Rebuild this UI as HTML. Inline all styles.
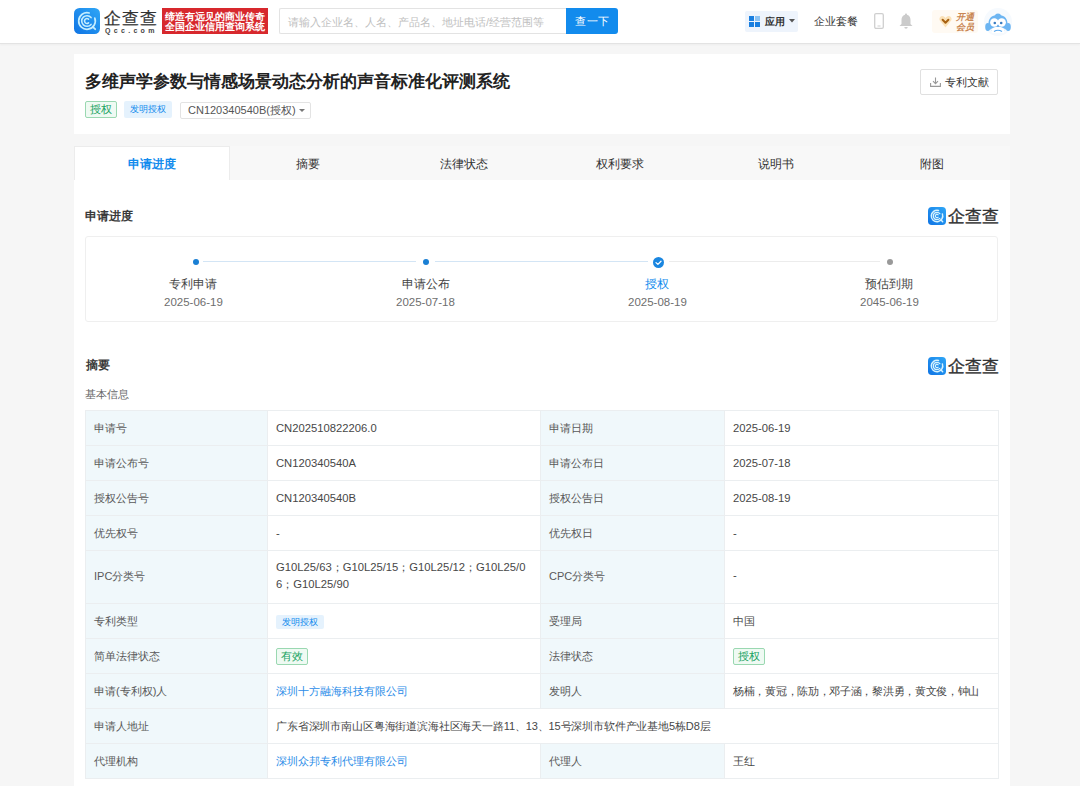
<!DOCTYPE html>
<html><head><meta charset="utf-8">
<style>
*{margin:0;padding:0;box-sizing:border-box}
html,body{width:1080px;height:786px;overflow:hidden}
body{background:#f6f6f6;font-family:"Liberation Sans",sans-serif;color:#333;font-size:12px;position:relative}
.abs{position:absolute}
.t{position:absolute;white-space:nowrap;line-height:1}
#hdr{position:absolute;left:0;top:0;width:1080px;height:44px;background:#fff;border-bottom:1px solid #e3e3e3;box-shadow:0 1px 2px rgba(0,0,0,0.04)}
.card{position:absolute;background:#fff}
.tab{position:absolute;top:147px;height:33px;width:156px;text-align:center;font-size:12px;line-height:35px;color:#333}
.h{position:absolute;font-size:12px;font-weight:bold;color:#3a3a3a;line-height:1;white-space:nowrap}
.tbl{position:absolute;left:85px;top:410px;width:913px;border-collapse:collapse;table-layout:fixed}
.tbl td{border:1px solid #ebeef0;font-size:11px;color:#474747;padding:0 8px;height:35px;line-height:18px;vertical-align:middle}
.tbl td.l{background:#f0f8fb;color:#595959}
.tag{display:inline-block;font-size:10px;line-height:14px;height:14px;padding:0 6px;border-radius:2px;vertical-align:middle}
.gtag{display:inline-block;border:1px solid #9ad8b1;background:#effaf3;color:#1aa362;font-size:11px;height:17px;line-height:15px;padding:0 4px;border-radius:2px;vertical-align:middle}
.tbl td.n{font-size:11.25px}
.tbl td{white-space:nowrap}
.tbl tr.ipc td{height:53px;line-height:17.5px}
.tbl tr.ipc td.n{padding-bottom:2px}
.tbl td.blue,.blue{color:#2a8ce8}
</style></head>
<body>
<div id="hdr">
  <!-- logo -->
  <svg class="abs" style="left:74px;top:8px" width="26" height="26" viewBox="0 0 26 26">
    <defs><linearGradient id="lg" x1="0" y1="1" x2="1" y2="0"><stop offset="0" stop-color="#0f74e4"/><stop offset="1" stop-color="#2fa6f6"/></linearGradient></defs>
    <rect width="26" height="26" rx="5.5" fill="url(#lg)"/>
    <path d="M20.8 10.16A8.3 8.3 0 1 1 15.15 4.98" fill="none" stroke="#c4eeff" stroke-width="1.7" stroke-linecap="round"/>
    <path d="M17.06 16.41A5.3 5.3 0 1 1 17.06 9.59" fill="none" stroke="#c4eeff" stroke-width="1.6" stroke-linecap="round"/>
    <path d="M14.54 14.84A2.4 2.4 0 1 1 14.54 11.16" fill="none" stroke="#c4eeff" stroke-width="1.5" stroke-linecap="round"/>
    <path d="M18.8 18.8L21.2 21.2" stroke="#c4eeff" stroke-width="1.8" stroke-linecap="round"/>
  </svg>
  <div class="t" style="left:104px;top:10px;font-size:17px;color:#333;letter-spacing:1px;-webkit-text-stroke:0.2px #333">企查查</div>
  <div class="t" style="left:105px;top:27px;font-size:7px;color:#444;letter-spacing:3.3px;font-weight:bold">Qcc.com</div>
  <div class="abs" style="left:162px;top:8px;width:106px;height:26px;background:#d7282d"></div>
  <div class="t" style="left:165px;top:12px;font-size:10px;color:#fff;font-weight:bold">缔造有远见的商业传奇</div>
  <div class="t" style="left:165px;top:22px;font-size:10px;color:#fff;font-weight:bold">全国企业信用查询系统</div>
  <!-- search -->
  <div class="abs" style="left:279px;top:8px;width:288px;height:26px;border:1px solid #e3e3e3;border-right:none;border-radius:2px 0 0 2px"></div>
  <div class="t" style="left:288px;top:17px;font-size:11px;color:#c0c0c0">请输入企业名、人名、产品名、地址电话/经营范围等</div>
  <div class="abs" style="left:566px;top:8px;width:52px;height:26px;background:#128bed;border-radius:0 3px 3px 0"></div>
  <div class="t" style="left:575px;top:16px;font-size:11px;color:#fff;letter-spacing:0.5px">查一下</div>
  <!-- right -->
  <div class="abs" style="left:745px;top:11px;width:53px;height:21px;background:#eef4fc;border-radius:2px"></div>
  <svg class="abs" style="left:749px;top:16px" width="12" height="11" viewBox="0 0 12 11">
    <rect x="0" y="0" width="5" height="5" fill="#1a7fe0"/><rect x="6" y="0" width="5" height="5" fill="#8cc3f3"/>
    <rect x="0" y="6" width="5" height="5" fill="#1a7fe0"/><rect x="6" y="6" width="5" height="5" fill="#1a7fe0"/>
  </svg>
  <div class="t" style="left:765px;top:17px;font-size:10px;color:#333;font-weight:bold">应用</div>
  <svg class="abs" style="left:789px;top:19px" width="6" height="4" viewBox="0 0 6 4"><path d="M0 0H6L3 3.5Z" fill="#555"/></svg>
  <div class="t" style="left:814px;top:16px;font-size:11px;color:#333">企业套餐</div>
  <svg class="abs" style="left:874px;top:13px" width="10" height="16" viewBox="0 0 10 16">
    <rect x="0.7" y="0.7" width="8.6" height="14.6" rx="1.3" fill="none" stroke="#cfcfcf" stroke-width="1.3"/>
    <path d="M3.5 13H6.5" stroke="#cfcfcf" stroke-width="1"/>
  </svg>
  <svg class="abs" style="left:899px;top:13px" width="14" height="16" viewBox="0 0 14 16">
    <path d="M7 0.5C7.8 0.5 8 1.2 8 1.8C10.5 2.4 11.5 4.5 11.5 7V11L13.5 13H0.5L2.5 11V7C2.5 4.5 3.5 2.4 6 1.8C6 1.2 6.2 0.5 7 0.5Z" fill="#cbcbcb"/>
    <path d="M5.3 14H8.7A1.7 1.7 0 0 1 5.3 14Z" fill="#cbcbcb"/>
  </svg>
  <div class="abs" style="left:932px;top:10px;width:46px;height:23px;background:#fffaf3;border-radius:3px"></div>
  <svg class="abs" style="left:939px;top:15px" width="13" height="13" viewBox="0 0 13 13">
    <path d="M6.5 12.5L0.8 5.5C-0.2 3.8 0.8 1 3.4 1C4.9 1 5.8 2 6.5 3C7.2 2 8.1 1 9.6 1C12.2 1 13.2 3.8 12.2 5.5Z" fill="#fbe2b8"/>
    <path d="M3.6 4.8L6.5 7.8L9.4 4.8" fill="none" stroke="#a86212" stroke-width="2" stroke-linecap="round" stroke-linejoin="round"/>
  </svg>
  <div class="t" style="left:956px;top:13px;font-size:9px;color:#c98652;font-style:italic;font-weight:bold">开通</div>
  <div class="t" style="left:956px;top:23px;font-size:9px;color:#c98652;font-style:italic;font-weight:bold">会员</div>
  <!-- avatar -->
  <svg class="abs" style="left:984px;top:8px" width="28" height="28" viewBox="0 0 28 28">
    <circle cx="14" cy="14" r="14" fill="#f6fafe"/>
    <path d="M14 5.5C16 5.5 16.5 6.5 17 7.2C21 8 23.5 11 23.5 15.5C23.5 20.5 19.5 25 14 25C8.5 25 4.5 20.5 4.5 15.5C4.5 11 7 8 11 7.2C11.5 6.5 12 5.5 14 5.5Z" fill="#6cb5f2"/>
    <ellipse cx="3.8" cy="19" rx="2.6" ry="4" fill="#6cb5f2"/>
    <ellipse cx="24.2" cy="19" rx="2.6" ry="4" fill="#6cb5f2"/>
    <circle cx="10.3" cy="14.5" r="4.2" fill="#fff"/>
    <circle cx="17.7" cy="14.5" r="4.2" fill="#fff"/>
    <path d="M7 21Q14 16 21 21L20 25H8Z" fill="#fff"/>
    <circle cx="10.8" cy="15" r="1.3" fill="#3a7cc0"/><circle cx="17.2" cy="15" r="1.3" fill="#3a7cc0"/>
    <path d="M12.8 17.8H15.2L14 19.2Z" fill="#4a90d9"/>
    <path d="M10 23.5Q14 21 18 23.5" fill="none" stroke="#5aa8ee" stroke-width="1.2"/>
  </svg>
</div>

<!-- title card -->
<div class="card" style="left:74px;top:54px;width:936px;height:80px"></div>
<div class="t" style="left:85px;top:73px;font-size:17px;font-weight:bold;color:#222">多维声学参数与情感场景动态分析的声音标准化评测系统</div>
<div class="abs" style="left:85px;top:101px;width:32px;height:17px;border:1px solid #9ad8b1;background:#effaf3;border-radius:2px"></div>
<div class="t" style="left:90px;top:104px;font-size:11px;color:#1aa362">授权</div>
<div class="abs" style="left:124px;top:101px;width:48px;height:17px;background:#e5f2fd;border-radius:2px"></div>
<div class="t" style="left:130px;top:105px;font-size:9px;color:#128bed">发明授权</div>
<div class="abs" style="left:180px;top:102px;width:131px;height:17px;border:1px solid #e3e3e3;border-radius:2px"></div>
<div class="t" style="left:188px;top:105px;font-size:11px;color:#555">CN120340540B(授权)</div>
<svg class="abs" style="left:299px;top:109px" width="6" height="4" viewBox="0 0 6 4"><path d="M0 0H6L3 3Z" fill="#777"/></svg>
<div class="abs" style="left:920px;top:69px;width:78px;height:26px;border:1px solid #e0e0e0;border-radius:2px;background:#fff"></div>
<svg class="abs" style="left:930px;top:77px" width="11" height="10" viewBox="0 0 11 10">
  <path d="M5.5 0.5V6.5M3 4.2L5.5 6.7L8 4.2" fill="none" stroke="#999" stroke-width="1.1"/>
  <path d="M0.6 6V9.4H10.4V6" fill="none" stroke="#999" stroke-width="1.1"/>
</svg>
<div class="t" style="left:945px;top:77px;font-size:11px;color:#333">专利文献</div>

<!-- tabs -->
<div class="abs" style="left:74px;top:146px;width:936px;height:34px;background:#f8f8f8"></div>
<div class="abs" style="left:74px;top:146px;width:156px;height:35px;background:#fff;border:1px solid #ececec;border-bottom:none"></div>
<div class="tab" style="left:74px;color:#128bed;font-weight:bold">申请进度</div>
<div class="tab" style="left:230px">摘要</div>
<div class="tab" style="left:386px">法律状态</div>
<div class="tab" style="left:542px">权利要求</div>
<div class="tab" style="left:698px">说明书</div>
<div class="tab" style="left:854px">附图</div>

<!-- content card -->
<div class="card" style="left:74px;top:180px;width:936px;height:606px"></div>

<div class="h" style="left:85px;top:210px">申请进度</div>
<!-- small logo -->
<svg class="abs" style="left:928px;top:207px" width="18" height="18" viewBox="0 0 26 26">
  <rect width="26" height="26" rx="5.5" fill="url(#lg)"/>
  <path d="M20.8 10.16A8.3 8.3 0 1 1 15.15 4.98" fill="none" stroke="#d6f3ff" stroke-width="2.1" stroke-linecap="round"/>
  <path d="M17.06 16.41A5.3 5.3 0 1 1 17.06 9.59" fill="none" stroke="#d6f3ff" stroke-width="2" stroke-linecap="round"/>
  <path d="M14.54 14.84A2.4 2.4 0 1 1 14.54 11.16" fill="none" stroke="#d6f3ff" stroke-width="1.8" stroke-linecap="round"/>
  <path d="M18.8 18.8L21.2 21.2" stroke="#d6f3ff" stroke-width="2.2" stroke-linecap="round"/>
</svg>
<div class="t" style="left:948px;top:208px;font-size:17px;color:#333;-webkit-text-stroke:0.35px #333">企查查</div>

<!-- progress -->
<div class="abs" style="left:85px;top:236px;width:913px;height:86px;border:1px solid #efefef;border-radius:3px"></div>
<div class="abs" style="left:203px;top:261px;width:213px;height:1px;background:#d3e5f5"></div>
<div class="abs" style="left:435px;top:261px;width:213px;height:1px;background:#d3e5f5"></div>
<div class="abs" style="left:669px;top:261px;width:211px;height:1px;background:#ececec"></div>
<div class="abs" style="left:193px;top:259px;width:6px;height:6px;border-radius:50%;background:#1a7fd4"></div>
<div class="abs" style="left:423px;top:259px;width:6px;height:6px;border-radius:50%;background:#1a7fd4"></div>
<svg class="abs" style="left:653px;top:257px" width="11" height="11" viewBox="0 0 11 11">
  <circle cx="5.5" cy="5.5" r="5.5" fill="#1a86e0"/>
  <path d="M3 5.6L4.9 7.4L8 4.2" fill="none" stroke="#fff" stroke-width="1.3" stroke-linecap="round" stroke-linejoin="round"/>
</svg>
<div class="abs" style="left:887px;top:259px;width:6px;height:6px;border-radius:50%;background:#999"></div>

<div class="t" style="left:169px;top:278px;font-size:12px;color:#454545">专利申请</div>
<div class="t" style="left:164px;top:297px;font-size:11.5px;color:#6e6e6e">2025-06-19</div>
<div class="t" style="left:402px;top:278px;font-size:12px;color:#454545">申请公布</div>
<div class="t" style="left:396px;top:297px;font-size:11.5px;color:#6e6e6e">2025-07-18</div>
<div class="t" style="left:645px;top:278px;font-size:12px;color:#128bed">授权</div>
<div class="t" style="left:628px;top:297px;font-size:11.5px;color:#6e6e6e">2025-08-19</div>
<div class="t" style="left:865px;top:278px;font-size:12px;color:#454545">预估到期</div>
<div class="t" style="left:860px;top:297px;font-size:11.5px;color:#6e6e6e">2045-06-19</div>

<!-- abstract -->
<div class="h" style="left:86px;top:359px">摘要</div>
<svg class="abs" style="left:928px;top:357px" width="18" height="18" viewBox="0 0 26 26">
  <rect width="26" height="26" rx="5.5" fill="url(#lg)"/>
  <path d="M20.8 10.16A8.3 8.3 0 1 1 15.15 4.98" fill="none" stroke="#d6f3ff" stroke-width="2.1" stroke-linecap="round"/>
  <path d="M17.06 16.41A5.3 5.3 0 1 1 17.06 9.59" fill="none" stroke="#d6f3ff" stroke-width="2" stroke-linecap="round"/>
  <path d="M14.54 14.84A2.4 2.4 0 1 1 14.54 11.16" fill="none" stroke="#d6f3ff" stroke-width="1.8" stroke-linecap="round"/>
  <path d="M18.8 18.8L21.2 21.2" stroke="#d6f3ff" stroke-width="2.2" stroke-linecap="round"/>
</svg>
<div class="t" style="left:948px;top:358px;font-size:17px;color:#333;-webkit-text-stroke:0.35px #333">企查查</div>
<div class="t" style="left:85px;top:389px;font-size:11px;color:#666">基本信息</div>

<table class="tbl">
<colgroup><col style="width:182px"><col style="width:273px"><col style="width:184px"><col style="width:274px"></colgroup>
<tr><td class="l">申请号</td><td class="n">CN202510822206.0</td><td class="l">申请日期</td><td class="n">2025-06-19</td></tr>
<tr><td class="l">申请公布号</td><td class="n">CN120340540A</td><td class="l">申请公布日</td><td class="n">2025-07-18</td></tr>
<tr><td class="l">授权公告号</td><td class="n">CN120340540B</td><td class="l">授权公告日</td><td class="n">2025-08-19</td></tr>
<tr><td class="l">优先权号</td><td class="n">-</td><td class="l">优先权日</td><td class="n">-</td></tr>
<tr class="ipc"><td class="l">IPC分类号</td><td class="n">G10L25/63；G10L25/15；G10L25/12；G10L25/0<br>6；G10L25/90</td><td class="l">CPC分类号</td><td class="n">-</td></tr>
<tr><td class="l">专利类型</td><td><span class="tag" style="background:#e5f2fd;color:#128bed;font-size:9px">发明授权</span></td><td class="l">受理局</td><td>中国</td></tr>
<tr><td class="l">简单法律状态</td><td><span class="gtag">有效</span></td><td class="l">法律状态</td><td><span class="gtag">授权</span></td></tr>
<tr><td class="l">申请(专利权)人</td><td class="blue">深圳十方融海科技有限公司</td><td class="l">发明人</td><td style="letter-spacing:-0.3px">杨楠，黄冠，陈劢，邓子涵，黎洪勇，黄文俊，钟山</td></tr>
<tr><td class="l">申请人地址</td><td colspan="3" style="letter-spacing:-0.15px">广东省深圳市南山区粤海街道滨海社区海天一路11、13、15号深圳市软件产业基地5栋D8层</td></tr>
<tr><td class="l">代理机构</td><td class="blue">深圳众邦专利代理有限公司</td><td class="l">代理人</td><td>王红</td></tr>
</table>

</body></html>
